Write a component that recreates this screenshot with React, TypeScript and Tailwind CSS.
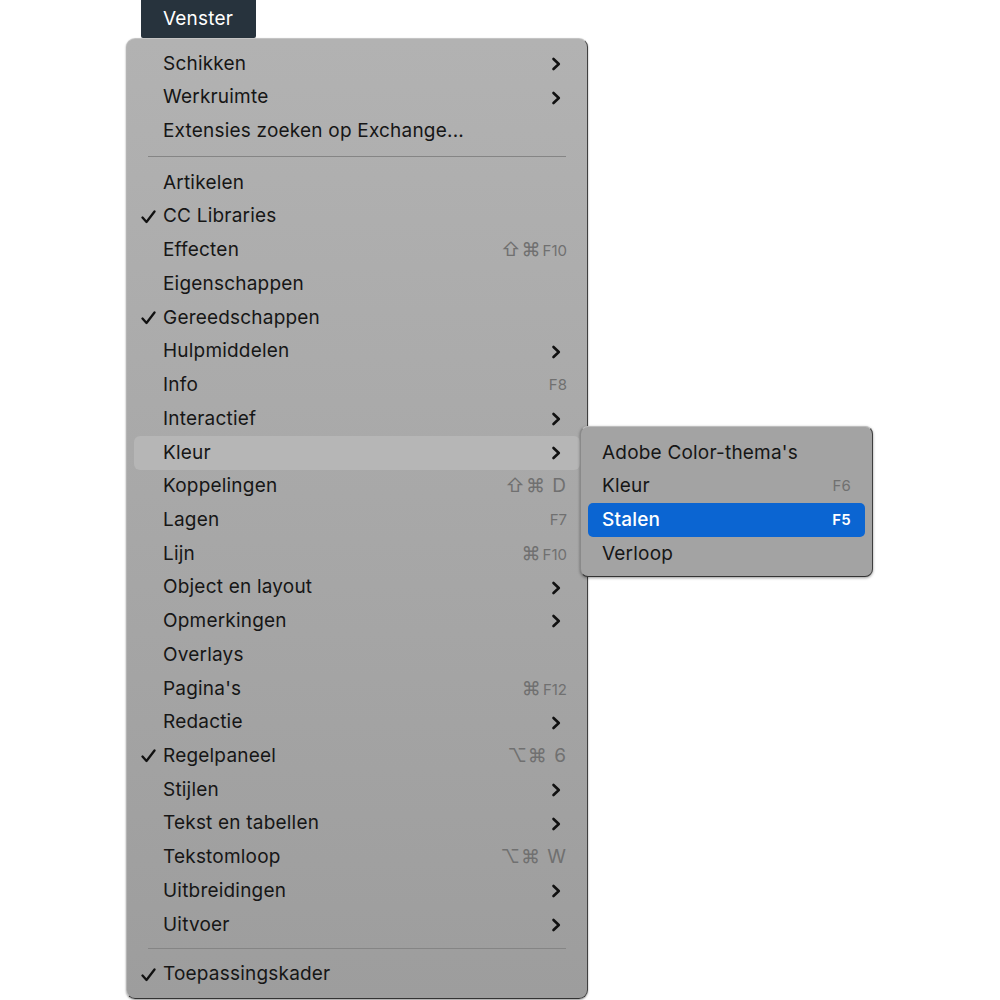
import React from "react";

type Item =
  | { kind: "sep"; h: string }
  | {
      kind?: "item";
      label: string;
      checked?: boolean;
      submenu?: boolean;
      keys?: string;
      fkey?: string;
      active?: boolean;
    };

const items: Item[] = [
  { label: "Schikken", submenu: true },
  { label: "Werkruimte", submenu: true },
  { label: "Extensies zoeken op Exchange..." },
  { kind: "sep", h: "h-[18px] pt-[8px]" },
  { label: "Artikelen" },
  { label: "CC Libraries", checked: true },
  { label: "Effecten", keys: "⇧⌘", fkey: "F10" },
  { label: "Eigenschappen" },
  { label: "Gereedschappen", checked: true },
  { label: "Hulpmiddelen", submenu: true },
  { label: "Info", fkey: "F8" },
  { label: "Interactief", submenu: true },
  { label: "Kleur", submenu: true, active: true },
  { label: "Koppelingen", keys: "⇧⌘ D" },
  { label: "Lagen", fkey: "F7" },
  { label: "Lijn", keys: "⌘", fkey: "F10" },
  { label: "Object en layout", submenu: true },
  { label: "Opmerkingen", submenu: true },
  { label: "Overlays" },
  { label: "Pagina's", keys: "⌘", fkey: "F12" },
  { label: "Redactie", submenu: true },
  { label: "Regelpaneel", checked: true, keys: "⌥⌘ 6" },
  { label: "Stijlen", submenu: true },
  { label: "Tekst en tabellen", submenu: true },
  { label: "Tekstomloop", keys: "⌥⌘ W" },
  { label: "Uitbreidingen", submenu: true },
  { label: "Uitvoer", submenu: true },
  { kind: "sep", h: "h-[16px] pt-[6px]" },
  { label: "Toepassingskader", checked: true },
];

function Check() {
  return (
    <svg width="15" height="14" viewBox="0 0 15 14" className="shrink-0">
      <path d="M1.5 7.5 L5.5 12 L13.5 1.5" fill="none" stroke="#111" strokeWidth="2.3" strokeLinecap="round" strokeLinejoin="round" />
    </svg>
  );
}

function Chevron() {
  return (
    <svg width="10" height="14" viewBox="0 0 10 14">
      <path d="M2.5 2 L7.8 7 L2.5 12" fill="none" stroke="#111" strokeWidth="2.6" strokeLinecap="round" strokeLinejoin="round" />
    </svg>
  );
}

export default function App() {
  return (
    <div className="relative w-[1000px] h-[1000px] bg-white font-['Inter',sans-serif] text-[#161616]">
      {/* MENU BAR TAB */}
      <div className="ml-[141px] w-[115px] h-[38px] bg-[#27333d] text-white text-[19px] tracking-[0.2px] flex items-center pl-[22px] rounded-b-[2px]">
        Venster
      </div>

      {/* MAIN MENU */}
      <div className="ml-[126px] w-[462px] h-[961px] rounded-[9px] border border-[#8a8a8a] border-t-[#c4c4c4] border-l-[#b5b5b5] border-r-[#3f3f3f] border-b-[#333] bg-gradient-to-b from-[#b2b2b2] to-[#9d9d9d] pt-[8px] shadow-[0_1px_2px_rgba(0,0,0,0.4)]">
        {items.map((it, i) =>
          it.kind === "sep" ? (
            <div key={i} className={`${it.h} px-[21px]`}>
              <div className="w-full h-px bg-[#858585]" />
            </div>
          ) : (
            <div
              key={i}
              className={`mx-[7px] h-[33.73px] flex items-center rounded-[6px] pl-[7px] pr-[19px] text-[19px] ${
                it.active ? "bg-[#b6b6b6]" : ""
              }`}
            >
              <div className="w-[22px] flex items-center">{it.checked && <Check />}</div>
              <span className="flex-1 tracking-[0.2px]">{it.label}</span>
              {it.submenu && <Chevron />}
              {(it.keys || it.fkey) && (
                <span className="flex items-baseline text-[#707070] -mr-[6px]">
                  {it.keys && <span className="text-[19px] tracking-[1px]">{it.keys}</span>}
                  {it.fkey && <span className="text-[15px] ml-[1px]">{it.fkey}</span>}
                </span>
              )}
            </div>
          )
        )}
      </div>

      {/* SUBMENU */}
      <div className="absolute left-[580px] top-[426px] w-[293px] h-[151px] rounded-[8px] border border-[#8a8a8a] border-t-[#bdbdbd] border-r-[#3f3f3f] border-b-[#333] bg-[#a3a3a3] pt-[9px] px-[7px] text-[19px] tracking-[0.2px] shadow-[0_1px_3px_rgba(0,0,0,0.4)]">
        <div className="h-[33.7px] flex items-center pl-[14px]">Adobe Color-thema's</div>
        <div className="h-[33.7px] flex items-center pl-[14px] pr-[14px]">
          <span className="flex-1">Kleur</span>
          <span className="text-[15px] text-[#707070]">F6</span>
        </div>
        <div className="h-[33.7px] flex items-center pl-[14px] pr-[14px] rounded-[5px] bg-[#0b65d2] text-white">
          <span className="flex-1 font-medium">Stalen</span>
          <span className="text-[15px] font-semibold">F5</span>
        </div>
        <div className="h-[33.7px] flex items-center pl-[14px]">Verloop</div>
      </div>
    </div>
  );
}
